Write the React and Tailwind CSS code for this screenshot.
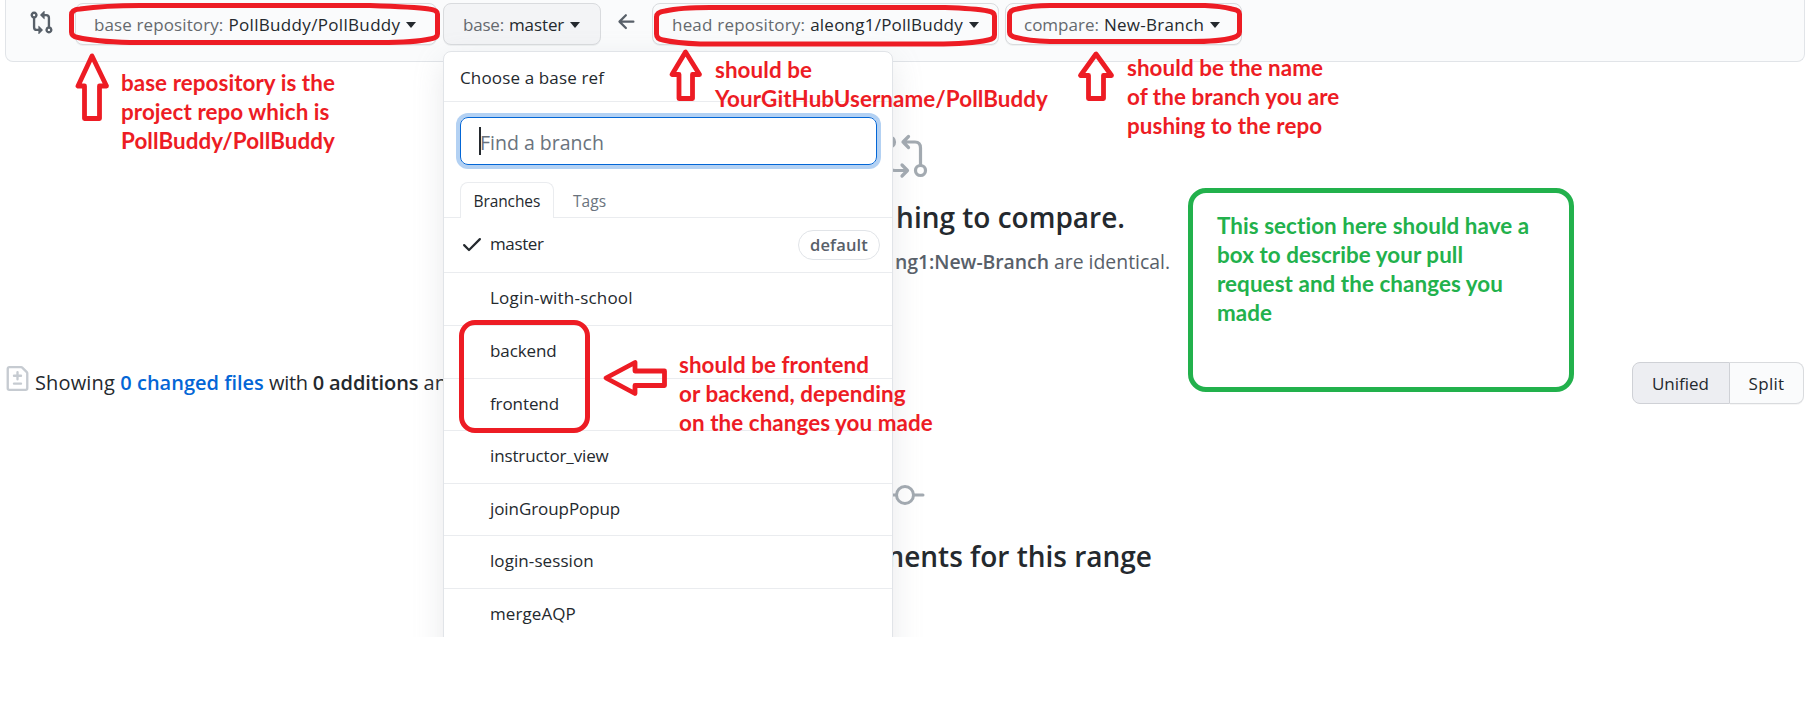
const GIT_COMPARE =
  "M9.573.677L7.177 3.073a.25.25 0 000 .354l2.396 2.396A.25.25 0 0010 5.646V4h1a1 1 0 011 1v5.628a2.251 2.251 0 101.5 0V5A2.5 2.5 0 0011 2.5h-1V.854a.25.25 0 00-.427-.177zM6 12v-1.646a.25.25 0 01.427-.177l2.396 2.396a.25.25 0 010 .354l-2.396 2.396A.25.25 0 016 15.146V13.5H5A2.5 2.5 0 012.5 11V5.372a2.25 2.25 0 111.5 0V11a1 1 0 001 1h1zm6.75 1.5a.75.75 0 100-1.5.75.75 0 000 1.5zM4 3.25a.75.75 0 11-1.5 0 .75.75 0 011.5 0z";
const ARROW_LEFT =
  "M7.78 12.53a.75.75 0 01-1.06 0L2.47 8.28a.75.75 0 010-1.06l4.25-4.25a.75.75 0 011.06 1.06L4.81 7h7.44a.75.75 0 010 1.5H4.81l2.97 2.97a.75.75 0 010 1.06z";
const CHECK =
  "M13.78 4.22a.75.75 0 010 1.06l-7.25 7.25a.75.75 0 01-1.06 0L2.22 9.28a.75.75 0 011.06-1.06L6 10.94l6.72-6.72a.75.75 0 011.06 0z";
const FILE_DIFF =
  "M2.75 1.5a.25.25 0 00-.25.25v12.5c0 .138.112.25.25.25h10.5a.25.25 0 00.25-.25V4.664a.25.25 0 00-.073-.177l-2.914-2.914a.25.25 0 00-.177-.073H2.75zM1 1.75C1 .784 1.784 0 2.75 0h7.586c.464 0 .909.184 1.237.513l2.914 2.914c.329.328.513.773.513 1.237v9.586A1.75 1.75 0 0113.25 16H2.75A1.75 1.75 0 011 14.25V1.75zm7 1.5a.75.75 0 01.75.75v1.5h1.5a.75.75 0 010 1.5h-1.5v1.5a.75.75 0 01-1.5 0V7h-1.5a.75.75 0 010-1.5h1.5V4A.75.75 0 018 3.25zm-3 8a.75.75 0 01.75-.75h4.5a.75.75 0 010 1.5h-4.5a.75.75 0 01-.75-.75z";

function Icon({ d, className }) {
  return (
    <svg viewBox="0 0 16 16" fill="currentColor" className={"shrink-0 " + className}>
      <path fillRule="evenodd" d={d} />
    </svg>
  );
}

function RefButton({ label, value, className, labelClass = "", valueClass = "" }) {
  return (
    <button
      className={
        "flex h-[42px] shrink-0 items-center rounded-[8px] border border-[#d9dbde] pt-px text-[17px] leading-6 whitespace-nowrap shadow-[0_1px_0_rgba(27,31,35,0.05)] " +
        className
      }
    >
      <span className={"text-[#65696e] " + labelClass}>{label}</span>
      <span className={"ml-[5px] font-medium text-[#24292e] " + valueClass}>{value}</span>
      <span className="ml-[6px] border-x-[5.5px] border-t-[6px] border-x-transparent border-t-[#24292e]" />
    </button>
  );
}

const BRANCHES = [
  { name: "Login-with-school", tone: "tracking-[0.2px]", height: "h-[53px]" },
  { name: "backend", tone: "tracking-[-0.1px]", height: "h-[52.5px]" },
  { name: "frontend", tone: "tracking-[-0.1px]", height: "h-[52.5px]" },
  { name: "instructor_view", tone: "tracking-[-0.13px]", height: "h-[52.5px]" },
  { name: "joinGroupPopup", tone: "tracking-[-0.08px]", height: "h-[52.5px]" },
  { name: "login-session", tone: "tracking-[0.08px]", height: "h-[52.5px]" },
  { name: "mergeAQP", tone: "tracking-[0.08px]", height: "h-[52.5px]" },
];

function RefMenu() {
  return (
    <div className="absolute top-[51px] left-[443px] h-[640px] w-[450px] rounded-t-[8px] border border-[#e1e4e8] bg-white shadow-[0_10px_30px_rgba(149,157,165,0.22)]">
      <div className="h-[50px] border-b border-[#eaecef] pt-[14px] pl-[16px] text-[17px] leading-6 font-medium tracking-[0.14px] text-[#24292e]">
        Choose a base ref
      </div>
      <div className="pt-[15px] pr-[15px] pl-[16px]">
        <div className="flex h-[48px] items-center rounded-[8px] border border-[#0366d6] pl-[18px] shadow-[0_0_0_4px_#b3d1f3]">
          <span className="h-[28px] w-[2px] bg-[#24292e]" />
          <span className="mt-[3px] -ml-px text-[19.5px] leading-7 text-[#6a737d]">Find a branch</span>
        </div>
      </div>
      <div className="mt-[17px] flex h-[36px] border-b border-[#eaecef] pl-[16px] text-[15.5px] leading-6">
        <div className="h-[36px] w-[94px] rounded-t-[8px] border border-b-0 border-[#eaecef] bg-white pt-[6px] pl-[12.5px] font-medium tracking-[-0.1px] text-[#24292e]">
          Branches
        </div>
        <div className="pt-[7px] pl-[19px] tracking-[0.05px] text-[#6a737d]">Tags</div>
      </div>
      <div className="flex h-[55px] items-center border-b border-[#eaecef] pr-[12px] pl-[16px] text-[17px]">
        <Icon d={CHECK} className="-mt-[3px] h-[24px] w-[24px] text-[#24292e]" />
        <span className="-mt-[3px] ml-[6px] flex-1 leading-6 tracking-[-0.38px] text-[#24292e]">master</span>
        <span className="flex h-[30px] w-[82px] items-center justify-center rounded-full border border-[#e1e4e8] pb-px text-[16.5px] leading-6 font-semibold tracking-[0.15px] text-[#586069]">
          default
        </span>
      </div>
      {BRANCHES.map((b) => (
        <div
          key={b.name}
          className={"border-b border-[#eaecef] pt-[13px] pl-[46px] text-[17px] leading-6 text-[#24292e] " + b.tone + " " + b.height}
        >
          {b.name}
        </div>
      ))}
    </div>
  );
}

const NOTE = "absolute font-[Lato,sans-serif] text-[22.4px] leading-[29px] font-bold tracking-[0.07px] whitespace-nowrap";

function Note({ className, lines }) {
  return (
    <div className={NOTE + " " + className}>
      {lines.map((l) => (
        <div key={l}>{l}</div>
      ))}
    </div>
  );
}

function Annotations() {
  return (
    <>
      <svg
        className="absolute top-0 left-0 h-[637px] w-[1805px]"
        viewBox="0 0 1805 637"
        fill="none"
        stroke="#ed1c24"
        strokeWidth="5"
        strokeLinejoin="round"
      >
        <path d="M71.5 15Q71.5 9.5 80 9Q105 5.5 140 5.5H370Q415 7 429 9Q437.5 10 437.5 14V34Q437.5 38 430 39Q415 42.5 380 42.5H130Q95 41.5 78 37.5Q71.5 36.5 71.5 32Z" />
        <path d="M656.5 17Q656.5 12 665 11Q680 7.500 710 7.500H945Q975 8.500 988 11Q994.500 12 994.500 16V35Q994.500 39 988 40Q970 44 935 44H700Q676 43 663 40Q656.500 39 656.500 34Z" />
        <path d="M1009.500 15Q1009.500 10 1017 9Q1032 5.500 1050 5.500H1205Q1220 6 1232 9Q1239.500 10 1239.500 14V32Q1239.500 36 1232 38Q1220 41.500 1190 41.500H1050Q1028 41 1016 37.500Q1009.500 36 1009.500 32Z" />
        <path strokeWidth="4.800" d="M92 56L78 86H84.500V118.500H99.500V86H106.500Z" />
        <path strokeWidth="4.800" d="M685.500 52L672 74.500H679V98.500H692.500V74.500H699.500Z" />
        <path strokeWidth="4.800" d="M1096 54L1080.500 75.500H1088.500V98.500H1103.500V75.500H1111.500Z" />
        <path strokeWidth="4.800" d="M606 378L635 362.500V371H664.500V385.500H635V393.500Z" />
      </svg>
      <div className="absolute top-[320px] left-[459px] h-[113px] w-[131px] rounded-[16px] border-[5px] border-[#ed1c24]" />
      <div className="absolute top-[188px] left-[1188px] h-[204px] w-[386px] rounded-[18px] border-[5px] border-[#22b14c]" />
      <Note className="top-[68px] left-[121px] text-[#ed1c24]" lines={["base repository is the", "project repo which is", "PollBuddy/PollBuddy"]} />
      <Note className="top-[55px] left-[715px] text-[#ed1c24]" lines={["should be", "YourGitHubUsername/PollBuddy"]} />
      <Note className="top-[53px] left-[1127px] text-[#ed1c24]" lines={["should be the name", "of the branch you are", "pushing to the repo"]} />
      <Note className="top-[350px] left-[679px] text-[#ed1c24]" lines={["should be frontend", "or backend, depending", "on the changes you made"]} />
      <Note
        className="top-[211px] left-[1217px] text-[#22b14c]"
        lines={["This section here should have a", "box to describe your pull", "request and the changes you", "made"]}
      />
    </>
  );
}

export default function App() {
  return (
    <div className="h-[717px] w-[1805px] overflow-hidden bg-white font-[Open_Sans,sans-serif]">
      <div className="relative h-[637px] overflow-hidden">
        <div className="ml-[5px] flex h-[62px] items-start rounded-b-[8px] border-x border-b border-[#e1e4e8] bg-[#fafbfc] pt-[3px]">
          <Icon d={GIT_COMPARE} className="mt-[7px] ml-[23px] h-[25px] w-[25px] text-[#586069]" />
          <RefButton
            label="base repository:"
            value="PollBuddy/PollBuddy"
            className="ml-[21px] w-[362px] bg-[#fafbfc] pl-[18px]"
            labelClass="tracking-[0.11px]"
            valueClass="tracking-[0.33px]"
          />
          <RefButton
            label="base:"
            value="master"
            className="ml-[6px] w-[158px] border-[#d1d4d8] bg-[#f3f4f6] pl-[19px]"
            labelClass="tracking-[-0.2px]"
            valueClass="tracking-[-0.1px]"
          />
          <Icon d={ARROW_LEFT} className="mt-[7px] ml-[14px] h-[24px] w-[24px] text-[#586069]" />
          <RefButton
            label="head repository:"
            value="aleong1/PollBuddy"
            className="ml-[13px] w-[347px] bg-[#fafbfc] pl-[19px]"
            labelClass="tracking-[0.2px]"
            valueClass="tracking-[0.23px]"
          />
          <RefButton
            label="compare:"
            value="New-Branch"
            className="ml-[6px] w-[237px] bg-[#fafbfc] pl-[18px]"
            valueClass="tracking-[0.28px]"
          />
        </div>

        <div className="flex h-[300px] w-[1170px] flex-col items-end pt-[72px] whitespace-nowrap">
          <svg viewBox="0 0 48 48" className="mr-[242px] h-[48px] w-[48px] text-[#a3aab1]" fill="none" stroke="currentColor" strokeWidth="3.2" strokeLinecap="round" strokeLinejoin="round">
            <circle cx="9.500" cy="8" r="5" />
            <path d="M9.500 13V31Q9.500 36.500 15 36.500H27M22 31L27.500 36.500L22 42" />
            <circle cx="40.500" cy="36.500" r="5" />
            <path d="M40.500 31.500V14Q40.500 8 35 8H23M28.500 2.500L23 8L28.500 13.500" />
          </svg>
          <h3 className="mt-[15px] mr-[45px] text-[28px] leading-[40px] font-semibold text-[#24292e]">hing to compare.</h3>
          <p className="mt-[10px] text-[19.4px] leading-[30px] text-[#586069]">
            <span className="font-semibold tracking-[-0.05px]">ng1:New-Branch</span> are identical.
          </p>
        </div>

        <div className="flex h-[42px] items-start justify-between pr-px pl-[4px] text-[20px] leading-[28px] text-[#24292e]">
          <div className="flex items-start whitespace-nowrap">
            <Icon d={FILE_DIFF} className="mt-[4px] ml-[0.5px] h-[25px] w-[25px] text-[#c6cbd1]" />
            <p className="mt-[7px] ml-[5.5px]">
              <span className="tracking-[0.15px]">Showing </span>
              <span className="font-semibold text-[#0366d6]">0 changed files</span> <span className="tracking-[-0.3px]">with </span>
              <span className="font-semibold tracking-[-0.1px]">0 additions</span> an
            </p>
          </div>
          <div className="flex h-[42px] text-[17px] leading-6 font-medium">
            <button className="w-[98px] rounded-l-[8px] border border-[#cfd1d6] bg-[#edeef2] pt-px pr-px">Unified</button>
            <button className="w-[74px] rounded-r-[8px] border border-l-0 border-[#d9dbde] bg-[#fafbfc] pt-px tracking-[0.3px] shadow-[0_1px_0_rgba(27,31,35,0.04)]">
              Split
            </button>
          </div>
        </div>

        <div className="flex w-[1152px] flex-col items-end pt-[79px] whitespace-nowrap">
          <svg viewBox="0 0 40 24" className="mr-[227px] h-[24px] w-[40px] text-[#a3aab1]" fill="none" stroke="currentColor" strokeWidth="3" strokeLinecap="round">
            <circle cx="20" cy="12" r="8.500" />
            <path d="M1.500 12H11M29 12H38" />
          </svg>
          <h3 className="mt-[29px] text-[28px] leading-[40px] font-semibold text-[#24292e]">ments for this range</h3>
        </div>

        <RefMenu />
        <Annotations />
      </div>
    </div>
  );
}
